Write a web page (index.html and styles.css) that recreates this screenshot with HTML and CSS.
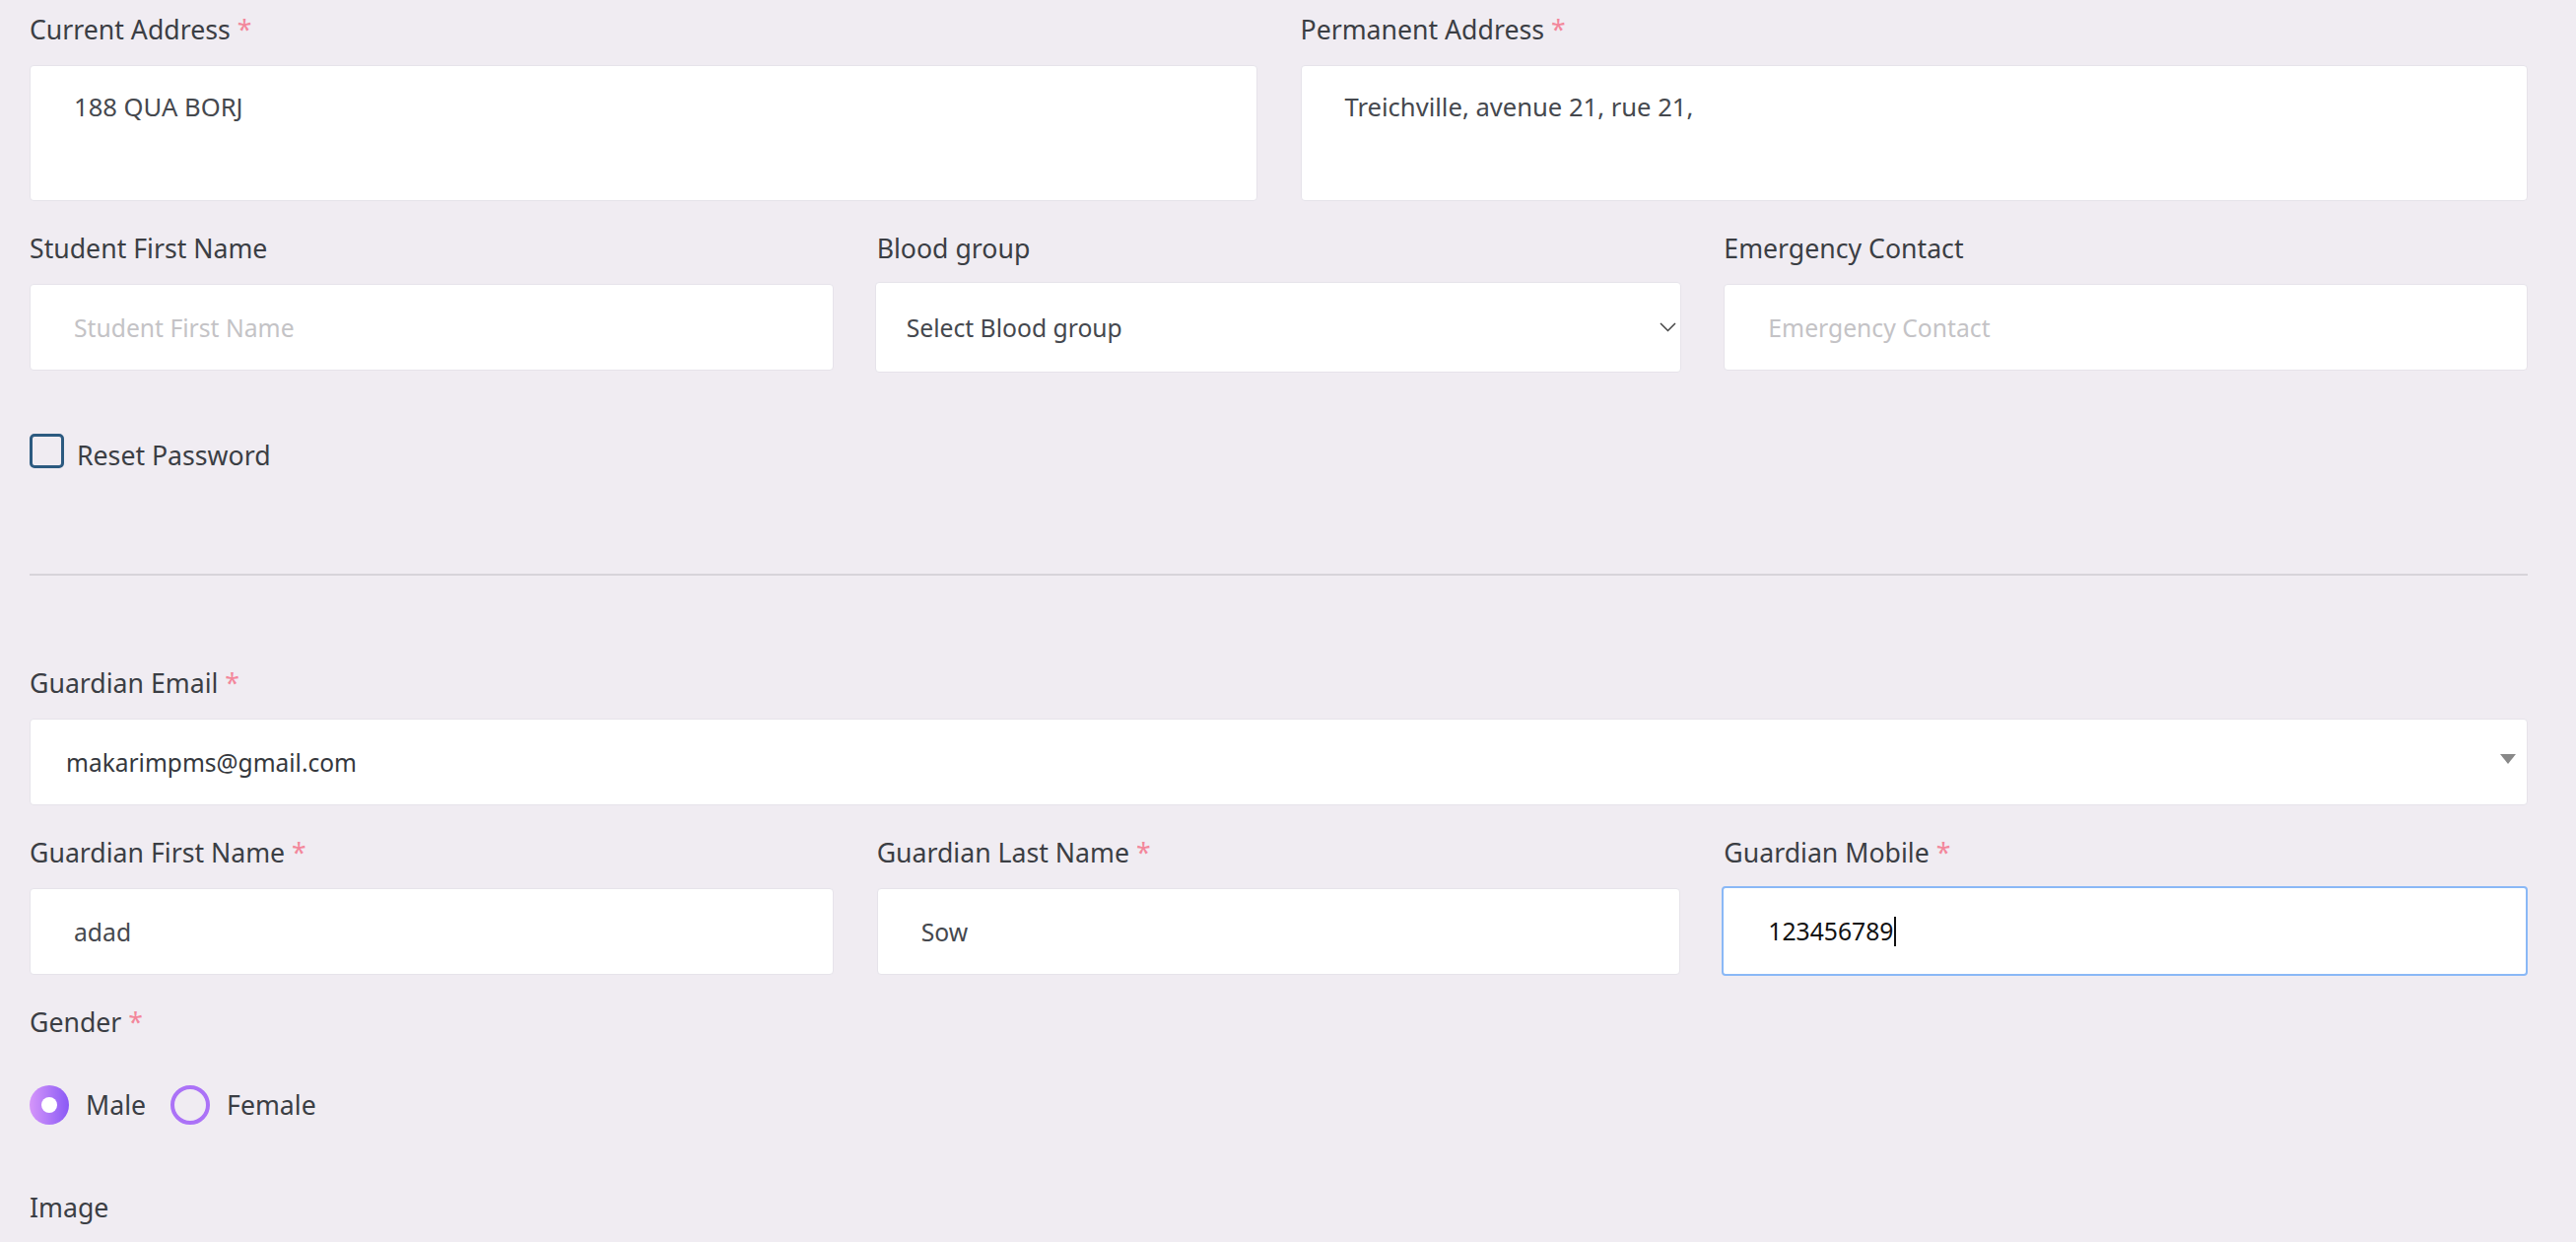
FILE: index.html
```html
<!DOCTYPE html>
<html lang="en">
<head>
<meta charset="utf-8">
<title>Student form</title>
<link rel="stylesheet" href="styles.css">
</head>
<body>
<form class="page">
  <div class="grid two">
    <div class="field">
      <label class="label">Current Address <span class="req">*</span></label>
      <textarea class="textarea">188 QUA BORJ</textarea>
    </div>
    <div class="field">
      <label class="label">Permanent Address <span class="req">*</span></label>
      <textarea class="textarea">Treichville, avenue 21, rue 21,</textarea>
    </div>
  </div>

  <div class="grid three">
    <div class="field">
      <label class="label">Student First Name</label>
      <input class="input" type="text" placeholder="Student First Name">
    </div>
    <div class="field">
      <label class="label">Blood group</label>
      <div class="select-wrap">
        <select class="select tall">
          <option>Select Blood group</option>
        </select>
        <svg class="chevron" width="17" height="10" viewBox="0 0 17 10"><polyline points="1,1 8.5,8.5 16,1" fill="none" stroke="#444" stroke-width="1.5"/></svg>
      </div>
    </div>
    <div class="field">
      <label class="label">Emergency Contact</label>
      <input class="input" type="text" placeholder="Emergency Contact">
    </div>
  </div>

  <div class="check-row">
    <input class="checkbox" type="checkbox">
    <span class="check-text">Reset Password</span>
  </div>

  <hr class="divider">

  <div class="field">
    <label class="label">Guardian Email <span class="req">*</span></label>
    <div class="select-wrap">
      <select class="select email">
        <option>makarimpms@gmail.com</option>
      </select>
      <svg class="caret-down" width="16" height="10" viewBox="0 0 16 10"><polygon points="0,0 16,0 8,10" fill="#888"/></svg>
    </div>
  </div>

  <div class="grid three">
    <div class="field">
      <label class="label">Guardian First Name <span class="req">*</span></label>
      <input class="input" type="text" value="adad">
    </div>
    <div class="field">
      <label class="label">Guardian Last Name <span class="req">*</span></label>
      <input class="input" type="text" value="Sow">
    </div>
    <div class="field">
      <label class="label">Guardian Mobile <span class="req">*</span></label>
      <div class="input focused"><span class="typed">123456789</span><span class="cursor"></span></div>
    </div>
  </div>

  <div class="field gender">
    <label class="label">Gender <span class="req">*</span></label>
    <div class="radios">
      <span class="radio checked"></span><span class="radio-text">Male</span>
      <span class="radio"></span><span class="radio-text">Female</span>
    </div>
  </div>

  <div class="field">
    <label class="label">Image</label>
  </div>
</form>
</body>
</html>
```
FILE: styles.css
```css
html, body {
  margin: 0;
  background: #f0ecf2;
}
body {
  font-family: "Noto Sans", "Open Sans", sans-serif;
  color: #3b3e44;
  overflow: hidden;
}
.page {
  width: 2535px;
  padding: 10px 0 0 30px;
}
.grid {
  display: grid;
  column-gap: 44px;
}
.grid.two { grid-template-columns: 1fr 1fr; }
.grid.three { grid-template-columns: 1fr 1fr 1fr; }

.field { margin-bottom: 28px; min-width: 0; }
.label {
  display: block;
  font-size: 26.67px;
  line-height: 40px;
  margin-bottom: 16px;
  color: #3b3e44;
}
.req { color: #f3879b; }

.textarea {
  display: block;
  box-sizing: border-box;
  width: 100%;
  height: 138px;
  margin: 0;
  padding: 22px 44px;
  border: 1px solid #e6e3ea;
  border-radius: 4px;
  background: #fff;
  font-family: inherit;
  font-size: 25.6px;
  line-height: 40px;
  color: #45484e;
  resize: none;
  outline: none;
}

.input {
  display: flex;
  align-items: center;
  box-sizing: border-box;
  width: 100%;
  height: 88px;
  margin: 0;
  padding: 0 44px;
  border: 1px solid #e6e3ea;
  border-radius: 4px;
  background: #fff;
  font-family: inherit;
  font-size: 24.7px;
  color: #45484e;
  outline: none;
}
.input::placeholder { color: #c4c3c6; }
.input.focused {
  border: 2px solid #8ab8f6;
  height: 91px;
  width: calc(100% + 2px);
  margin: -2px -1px -1px -2px;
  padding-left: 45px;
  color: #111;
}
.cursor {
  display: inline-block;
  width: 2px;
  height: 30px;
  background: #111;
  margin-left: 1px;
}

.select-wrap { position: relative; }
.select {
  display: block;
  box-sizing: border-box;
  width: 100%;
  height: 88px;
  margin: 0;
  border: 1px solid #e6e3ea;
  border-radius: 4px;
  background: #fff;
  font-family: inherit;
  font-size: 24.5px;
  color: #35383d;
  -webkit-appearance: none;
  appearance: none;
  outline: none;
}
.select.tall {
  height: 92px;
  width: calc(100% + 3px);
  margin: -2px -1px -2px -2px;
  padding-left: 31px;
  font-size: 24.7px;
  color: #45484e;
}
.select.email { padding-left: 36px; }
.chevron {
  position: absolute;
  right: 4px;
  top: 41px;
}
.caret-down {
  position: absolute;
  right: 12px;
  top: 36px;
}

.check-row {
  display: flex;
  align-items: flex-start;
  margin-top: 36px;
}
.checkbox {
  -webkit-appearance: none;
  appearance: none;
  box-sizing: border-box;
  width: 35px;
  height: 35px;
  margin: 0 13px 0 0;
  border: 3px solid #2c5a80;
  border-radius: 5px;
  background: transparent;
}
.check-text {
  font-size: 26.67px;
  line-height: 40px;
  margin-top: 2px;
}

.divider {
  border: 0;
  border-top: 2px solid #d7d4da;
  margin: 100px 0 89px;
}

.gender { margin-bottom: 64px; }
.radios {
  display: flex;
  align-items: center;
  margin-top: 44px;
  height: 40px;
}
.radio {
  box-sizing: border-box;
  width: 40px;
  height: 40px;
  border-radius: 50%;
  border: 4px solid #ab72f7;
  display: flex;
  align-items: center;
  justify-content: center;
  margin-left: 25px;
}
.radio.checked {
  margin-left: 0;
  border: 0;
  background: linear-gradient(to right, #d596fa, #8a5af5);
}
.radio.checked::after {
  content: "";
  width: 16px;
  height: 16px;
  border-radius: 50%;
  background: #fff;
}
.radio-text {
  font-size: 26.67px;
  line-height: 40px;
  margin-left: 17px;
}
```
